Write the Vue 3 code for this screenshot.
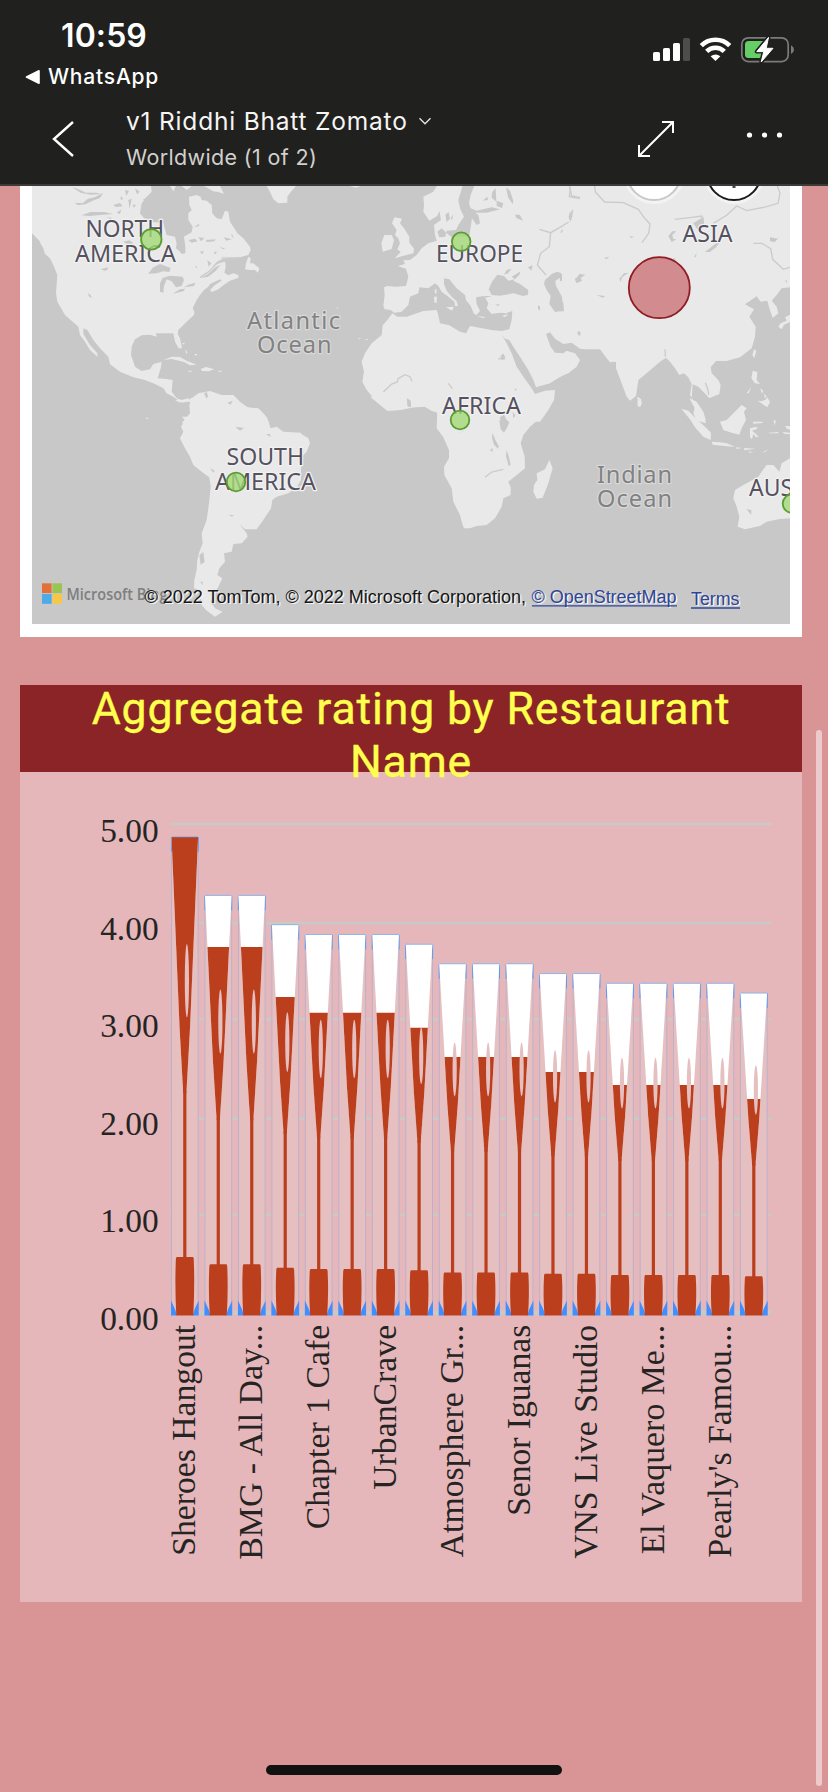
<script setup>
const land = [
  {
    t: 'translate(0 180) scale(.33333)',
    shapes: [
      'M96 10H452L455 35 440 50 425 70 420 100 432 115 455 125 490 130 500 165 525 170 530 190 528 205 540 215 545 222 556 220 556 200 552 170 575 157 578 140 565 120 565 100 575 90 568 75 567 50 590 45 602 50 605 60 620 62 635 75 637 100 650 115 665 118 675 92 685 95 690 125 700 140 712 160 730 175 750 200 752 210 745 225 720 232 690 234 665 238 650 246 640 258 660 248 676 245 677 262 673 278 685 286 700 280 715 285 716 293 690 302 672 314 655 328 636 336 630 330 645 315 665 302 660 298 630 312 625 320 612 330 600 345 590 360 578 385 583 395 582 405 560 425 535 450 533 462 540 475 546 505 536 505 525 485 520 460 500 460 468 460 470 470 450 464 425 466 405 478 395 500 393 525 405 560 425 573 450 568 460 552 485 545 482 565 473 595 500 597 518 600 515 635 530 655 545 660 565 655 575 665 560 665 545 668 520 650 500 640 490 625 465 612 435 600 400 592 360 575 330 553 325 530 300 505 280 480 262 450 250 445 250 462 270 495 292 520 292 530 270 510 255 485 240 465 235 440 218 425 195 405 172 365 168 340 172 285 160 255 150 235 135 222 130 205 118 182 96 160Z',
      'M120 188 132 192 142 212 132 206ZM148 232 168 238 182 262 165 255Z',
      'M735 268 738 250 745 230 752 235 750 250 760 250 778 265 774 278 765 270 750 270Z',
      'M800 18H888L875 32 862 50 862 68 835 70 820 58 810 35Z',
      'M510 18 528 18 520 34ZM545 18 575 18 560 30ZM612 18 660 18 672 42 655 36 640 34Z',
      'M490 540 515 530 540 531 560 542 590 554 570 556 552 546 515 537ZM602 567 618 561 643 568 625 574 606 573ZM565 572h10v3h-10zM655 572h10v3h-10zM546 490l8 -2-2 6zM555 507l7 10-3 6zM582 522l10 0-4 6z',
      'M545 730 570 700 568 675 575 655 595 640 630 633 665 645 700 645 720 665 745 683 775 685 795 705 808 730Z',
      'M438 712l8 3-6 3z'
    ]
  },
  {
    t: 'translate(300 180) scale(.33333)',
    shapes: [
      'M415 10 400 35 370 50 372 75 370 95 388 122 412 108 418 92 423 120 402 135 405 165 410 182 385 190 365 205 350 225 330 240 310 241 315 252 293 258 318 266 325 290 318 318 285 320 262 318 252 322 254 345 250 378 254 388 272 390 283 398 305 395 325 375 330 350 355 340 358 322 385 325 405 310 415 318 425 335 445 350 463 365 465 378 474 378 470 364 455 350 440 332 432 312 432 295 448 298 470 325 495 345 498 360 512 378 522 402 530 405 540 392 530 372 528 352 552 348 565 370 560 385 575 402 600 398 618 400 637 393 635 420 628 448 605 453 575 450 510 438 498 460 480 455 448 436 420 430 414 402 410 390 370 393 320 410 292 410 277 400 262 420 248 436 245 465 215 490 195 520 185 545 192 575 187 605 200 630 230 665 262 692 300 690 340 682 375 680 395 692 412 696 413 725H720L745 690 762 660 765 630 735 632 705 642 695 625 670 590 650 560 635 520 620 490 606 466 615 476 628 480 640 500 660 530 685 570 700 600 708 622 750 610 790 585 820 560 840 540V10Z',
      'M283 112 306 116 300 130 312 145 328 170 328 188 342 206 340 220 300 230 284 235 302 216 292 208 300 190 295 175 285 165 290 150 276 130Z',
      'M253 165 275 165 282 180 275 207 248 215 244 190Z',
      'M438 382 462 380 456 392ZM402 350 411 350 410 368 403 368ZM404 330 410 326 409 342 405 340ZM530 408l28 3-10 3zM606 408l18-6-8 9zM150 18h32l-15 5z',
      'M175 475h6v2h-6zM196 478h8v2h-8zM110 382l6 2-4 2z'
    ]
  },
  {
    t: 'translate(560 180) scale(.33333)',
    shapes: [
      'M0 10V490L35 495 40 505 75 508 120 508 140 535 150 547 168 545 168 565 185 610 200 650 210 662 228 648 235 600 265 575 300 545 318 533 330 545 345 565 358 585 372 580 385 592 395 612 390 645 408 675 430 700 438 730 410 722 400 700 405 680 395 655 398 613 415 620 430 635 448 655 478 642 482 615 475 600 455 580 452 562 468 543 500 543 540 532 575 505 585 470 587 440 568 410 582 388 555 373 590 349 602 365 622 362 628 385 638 414 655 400 650 380 635 362 650 345 665 325 690 322V10Z',
      'M0 510 20 518 60 540 50 560 25 580 0 590Z',
      'M690 404 675 412 680 422 662 430 655 440 665 448 672 434 690 426Z',
      'M582 508 589 512 583 535 577 525ZM235 650 246 668 240 682 232 675ZM578 572 592 576 590 600 600 612 585 610 574 595ZM600 625l10 8-4 8zM612 640l8 10-6 4zM592 662 612 665 622 652 630 666 622 682 608 672ZM560 640l14-20-8 20z'
    ]
  },
  {
    t: 'translate(0 400) scale(.33333)',
    shapes: [
      'M545 50 555 60 543 80 550 95 540 115 555 145 570 170 580 195 605 215 628 232 632 260 627 310 620 360 605 400 608 430 598 455 592 480 590 510 583 540 582 565 600 572 605 615 618 630 645 650 668 635 645 625 632 605 645 580 655 560 667 535 652 525 658 505 675 485 672 460 695 455 700 432 725 430 743 410 740 400 718 372 735 388 770 388 790 360 813 325 817 300 830 290 865 280 890 262 903 240V98L850 95 830 80 812 85 800 50Z',
      'M570 -5H700L730 20 770 25 790 45 808 85 600 90 560 60 572 40ZM525 0 545 0 540 8Z'
    ]
  },
  {
    t: 'translate(300 400) scale(.33333)',
    shapes: [
      'M-2 98 25 115 30 130 20 155 5 170 5 190 -2 245Z',
      'M210 -10 262 32 300 30 340 22 375 20 395 32 412 38 410 85 430 112 447 150 447 175 432 200 433 225 455 265 460 305 480 345 488 375 492 385 510 385 530 378 560 375 585 355 605 320 610 295 632 285 632 262 625 245 650 225 675 205 674 170 662 130 670 105 690 80 725 50 750 10 758 -10Z',
      'M748 180 758 205 745 250 728 293 710 296 700 275 702 255 712 240 710 220 735 208Z'
    ]
  },
  {
    t: 'translate(560 400) scale(.33333)',
    shapes: [
      'M480 65 500 60 520 40 545 15 560 25 552 35 558 60 545 85 538 104 515 98 490 90Z',
      'M364 26 385 32 410 58 435 80 453 98 452 120 430 110 405 82 390 58Z',
      'M388 -5 410 5 430 35 438 62 415 48 402 20Z',
      'M455 125 480 127 500 130 525 140 500 139 458 134ZM528 142l18 2-16 3zM552 144l35 2-34 5zM605 158 625 148 615 156ZM565 153l14 4-10 1z',
      'M570 85 590 80 592 86 576 92 584 98 596 110 588 112 580 102 576 118 570 112ZM578 65l30 0v4l-28 2zM640 60l8 2-4 14zM625 98l30-2v4l-28 0zM675 78 690 78V88L682 88ZM668 96l22 2v5l-18-2zM600 5 620 -2 628 8 615 18Z',
      'M690 175 665 190 658 215 640 195 620 195 605 215 595 230 550 255 525 270 520 295 530 320 538 350 533 380 555 388 600 378 620 365 655 358 690 355Z',
      'M232 -10 244 -2 243 18 235 20Z'
    ]
  }
]

const water = [
  {
    t: 'translate(0 180) scale(.33333)',
    shapes: [
      'M444 281 460 262 480 252 512 264 508 276 490 274 470 280Z',
      'M480 335 480 310 488 294 510 287 548 290 552 300 545 318 528 322 515 304 500 298 492 318 490 338Z',
      'M518 341 540 328 556 326 550 334ZM552 322 565 314 586 308 582 318Z',
      'M262 338l10 8 4 8-8-4zM302 268l22-6-2 8-8 2zM224 68l24 2 16-14 20-4 26-14-10 16-22 8-20 10-24 4zM216 22l16 4 26 12 32 0 12 4-30 2-30-6zM244 106l28-10 40 0 28 6-30 2-42 4zM320 112l16 2-4 4zM370 185l18-4 12 8-14 8zM340 75l20-6 8 10-20 2zM350 98l14-10-4 14zM375 30l12 2-8 16zM405 25l14 10-8 8zM385 60l10-4-6 30zM362 48l8 8-8 4zM428 60l14-10 0 10zM398 74l10 0-6 10z',
      'M565 180l20-4 8 8-18 4zM595 172l18 2-10 10zM582 142l14-10 2 6zM617 180l30-2-4 6-22 2zM600 215l12-2-6 10zM622 240l12 10-8 10zM588 256l4 10-6-4zM672 172l24 6-18 4zM660 200l16 6-8 2zM695 160l6 14-6-4zM640 220l10-8-2 10zM602 294l22-12 22-20 16-8-16 20-22 16z',
      'M612 640l8-4 4 12-4 8zM682 668l16-6-6 12z'
    ]
  },
  {
    t: 'translate(300 180) scale(.33333)',
    shapes: [
      'M490 10 475 60 480 85 492 110 475 135 468 150 440 152 436 170 418 172 412 155 425 145 440 160 455 172 508 168 512 140 516 115 530 135 540 130 535 105 526 98 560 98 600 88 575 82 530 92 512 85 507 70 512 45 526 10Z',
      'M592 284 612 288 625 302 645 298 635 290 662 274 658 284 640 302 660 312 685 330 684 344 670 348 640 340 600 347 575 345 566 328 576 305ZM612 284 620 270 635 266 624 280ZM552 348h24l-20 5z',
      'M735 300 755 282 772 275 784 280 784 292 766 302 768 318 786 350 790 392 765 396 748 372 752 348 740 330 732 312Z',
      'M738 462 750 457 765 476 790 492 815 488 840 506V540L825 520 800 512 790 520 765 518 752 500Z',
      'M577 35l10-10 2 40-14-12zM548 62l14-12 2 10zM590 62l20 8-4 14-16-6zM618 22l12 10 10 30-2 10-14-20zM645 104l14 0 10 18-20-8zM436 104l10-8 4 20-10 10zM452 115l8-12-4 18zM320 655l10 5 4 22-10-4zM602 528l8-8 6 18-12 2zM684 262l14-6-4 16zM690 372l10 4zM714 376l6 4 0 12-6-6zM825 295l15-6v16l-12 0zM585 374l14-2-4 6z',
      'M600 712l12-8 8 16-18 4z'
    ]
  },
  {
    t: 'translate(560 180) scale(.33333)',
    shapes: [
      'M435 216 470 188 482 184 470 200 450 216ZM402 232 410 218 408 230ZM325 168l12-14 12 0-12 10 2 12 10 2-14 8zM400 130l30-20 4 30-18 14zM630 172l24 4-10 10-14-2zM46 300l12-18 18 2-14 10 4 8-16 8zM178 296l14-16 14-2-20 14-4 14zM110 345l26 3-8 5zM132 234l16-4-8 8zM54 454l8 2-2 12-8-6zM30 95l8 10-6 20-6-14zM208 168l14 2-8 4zM335 238l10-4 2 10zM675 300l6 2 0 8zM0 278l6 6 0 20-6-2zM0 360l10 8 2 26-12 0zM465 548l20-4 8 22-12 4z'
    ]
  },
  {
    t: 'translate(0 400) scale(.33333)',
    shapes: ['M706 80l26 4-12 8zM798 102l12 0 2 10zM630 204l14 8-4 6zM686 344l16 2-6 4zM598 466l12-10 4 30-12 8zM600 545l8 0 0 10z']
  },
  {
    t: 'translate(300 400) scale(.33333)',
    shapes: ['M598 62l14-8 16 12-6 16-10 16-10-10zM578 98l8 22 10 18-2 8-12-12-6-20zM620 150l6 18 6 26-6 4-8-30zM570 150l8-6 0 12zM638 35l8 12-6 8zM478 100l14-10-6 6zM322 0l10 2 0 20-10-4z']
  },
  { t: 'translate(560 400) scale(.33333)', shapes: ['M560 328l14 2 0 14-6-6z'] }
]

const rivers = [
  { t: 'translate(0 180) scale(.33333)', shapes: ['M600 292 628 274 648 252 672 242 720 236', 'M665 234h60'] },
  {
    t: 'translate(300 180) scale(.33333)',
    shapes: [
      'M250 636 275 612 292 606 294 596 315 584 330 590 336 604',
      'M808 18 815 48 840 52M810 120 818 92M718 148 752 158 780 142 806 126M752 158 748 200 722 220 712 255 738 285M620 480 630 486M445 610l12 16M645 626l4 6M595 538l20-10'
    ]
  },
  {
    t: 'translate(560 180) scale(.33333)',
    shapes: [
      'M104 18 106 36 134 66 190 68 235 88 252 112 270 132 266 160 246 188M32 22 28 50 60 56M38 90 28 116M2 158 8 150',
      'M344 118 395 112 425 108 430 122M460 130 500 106 530 78 560 92 620 80 654 70 660 40 652 18M580 190 606 190 632 206 638 238 670 268 690 262M315 508 316 530M436 608 444 630 446 645'
    ]
  },
  { t: 'translate(300 400) scale(.33333)', shapes: ['M555 232 575 216 610 208'] }
]

const labels = [
  { s: 'NORTH', x: 85.5, y: 237, w: 78.5 },
  { s: 'AMERICA', x: 75, y: 262, w: 101 },
  { s: 'EUROPE', x: 436, y: 262, w: 87 },
  { s: 'ASIA', x: 682.5, y: 242, w: 50 },
  { s: 'AFRICA', x: 442, y: 414, w: 79 },
  { s: 'SOUTH', x: 226.5, y: 465, w: 77.5 },
  { s: 'AMERICA', x: 215, y: 490, w: 101 },
  { s: 'AUS', x: 749, y: 496, w: 44 }
]
const oceans = [
  { s: 'Atlantic', x: 247, y: 329, w: 93 },
  { s: 'Ocean', x: 257, y: 353, w: 74.5 },
  { s: 'Indian', x: 597, y: 483, w: 75 },
  { s: 'Ocean', x: 597, y: 507, w: 75 }
]
const pins = [
  [151.3, 239.4, 10.2],
  [461.2, 241.7, 9.3],
  [460, 420, 9.3],
  [236, 482, 9.3],
  [792, 503.6, 9.3]
]

const base = 1315.5
const ratings = [
  [4.9, 836.8], [4.3, 947], [4.3, 947], [4.0, 997], [3.9, 1012.8], [3.9, 1012.8],
  [3.9, 1012.8], [3.8, 1027.7], [3.6, 1057], [3.6, 1057], [3.6, 1057], [3.5, 1072],
  [3.5, 1072], [3.4, 1085], [3.4, 1085], [3.4, 1085], [3.4, 1085], [3.3, 1099]
]
const columns = ratings.map(([v, level], i) => {
  const h = v * 97.7
  const top = base - h
  const x = 171 + i * 33.47
  const c = x + 13.8
  const neck = top + h * 0.536
  const cone = `M${x + 0.5} ${top}H${x + 27.1}L${c + 5.2} ${top + h * 0.4}L${c + 1.6} ${neck}H${c - 1.6}L${c - 5.2} ${top + h * 0.4}Z`
  const grip = base - h * 0.122
  const handle = `M${c - 8} ${grip}H${c + 8}Q${c + 9} ${grip} ${c + 9} ${grip + 4}Q${c + 10} ${(grip + base) / 2} ${c + 8.5} ${base}H${c - 8.5}Q${c - 10} ${(grip + base) / 2} ${c - 9} ${grip + 4}Q${c - 9} ${grip} ${c - 8} ${grip}Z`
  return { i, h, top, x, c, neck, cone, handle, level, grip, holeY: top + h * 0.3005, holeR: h * 0.0765 }
})
const grid = [824, 923, 1019.3, 1118.6, 1215]
const ticks = [
  ['5.00', 842], ['4.00', 939.8], ['3.00', 1037.3], ['2.00', 1134.8], ['1.00', 1232.2], ['0.00', 1329.6]
]
const names = [
  ['Sheroes Hangout', 231], ['BMG - All Day...', 235], ['Chapter 1 Cafe', 204.5], ['UrbanCrave', 165],
  ['Atmosphere Gr...', 232.5], ['Senor Iguanas', 191], ['VNS Live Studio', 234], ['El Vaquero Me...', 229.5],
  ["Pearly's Famou...", 233]
]
</script>

<template>
  <div class="screen">
    <header class="top">
      <div class="status">
        <div class="clock">
          <div class="time">10:59</div>
          <div class="return">
            <svg width="16" height="16" viewBox="0 0 16 16"><path d="M1.5 8 14 1.8V14.2Z" fill="#fff" stroke="#fff" stroke-width="1.6" stroke-linejoin="round" /></svg>
            <span>WhatsApp</span>
          </div>
        </div>
        <svg class="radio" width="146" height="32" viewBox="650 34 146 32">
          <g fill="#fff">
            <rect x="653" y="52" width="7" height="9" rx="1.6" />
            <rect x="663" y="48" width="7" height="13" rx="1.6" />
            <rect x="673" y="43" width="7" height="18" rx="1.6" />
            <rect x="683" y="38" width="7" height="23" rx="1.6" fill="#4d4d4b" />
          </g>
          <g fill="none" stroke="#fff" stroke-width="4.6">
            <path d="M701.3 45.6A20.3 20.3 0 0 1 729.7 45.6" />
            <path d="M706.7 51.4A12.6 12.6 0 0 1 724.3 51.4" />
          </g>
          <path d="M715.5 61 710.6 56.2Q715.5 52.6 720.4 56.2Z" fill="#fff" />
          <rect x="741.8" y="37.8" width="46.4" height="23.8" rx="6.5" fill="none" stroke="#7b7b7a" stroke-width="1.7" />
          <path d="M791 45.3Q794 47 794 49.7T791 54Z" fill="#7b7b7a" />
          <path d="M748.5 41H763V58H748.5Q745 58 745 54.5V44.5Q745 41 748.5 41Z" fill="#65cf66" />
          <path d="M768.5 37.4 756.8 51.6H763.8L761.2 62 773 48.3H766.2Z" fill="#fff" stroke="#20201e" stroke-width="4" stroke-linejoin="round" />
          <path d="M768.5 37.4 756.8 51.6H763.8L761.2 62 773 48.3H766.2Z" fill="#fff" stroke="#fff" stroke-width="1" stroke-linejoin="round" />
        </svg>
      </div>
      <div class="nav">
        <svg class="back" width="24" height="40" viewBox="51 119 24 40"><path d="M73 122 54 139 73 156" fill="none" stroke="#fff" stroke-width="2.4" /></svg>
        <div class="titles">
          <div class="report">
            <span>v1 Riddhi Bhatt Zomato</span>
            <svg width="14" height="10" viewBox="417 116 14 10"><path d="M418.5 118.3 424 123.8 429.5 118.3" fill="none" stroke="#e6e6e6" stroke-width="1.3" /></svg>
          </div>
          <div class="pageno">Worldwide (1 of 2)</div>
        </div>
        <svg class="expand" width="40" height="40" viewBox="636 119 40 40"><path d="M639 156 673 122M662 122H673V133M639 145V156H650" fill="none" stroke="#fff" stroke-width="2" /></svg>
        <svg class="more" width="38" height="10" viewBox="746 130 38 10"><g fill="#fff"><circle cx="749.5" cy="135" r="2.6" /><circle cx="764.5" cy="135" r="2.6" /><circle cx="779.5" cy="135" r="2.6" /></g></svg>
      </div>
    </header>

    <main class="canvas">
      <section class="mapcard">
        <svg class="map" width="758" height="438" viewBox="32 186 758 438">
          <rect x="32" y="186" width="758" height="438" fill="#c8c8c8" />
          <g v-for="(g, i) in land" :key="'l' + i" :transform="g.t" fill="#e9e9e9"><path v-for="(d, j) in g.shapes" :key="j" :d="d" /></g>
          <g v-for="(g, i) in water" :key="'w' + i" :transform="g.t" fill="#c8c8c8"><path v-for="(d, j) in g.shapes" :key="j" :d="d" /></g>
          <g v-for="(g, i) in rivers" :key="'r' + i" :transform="g.t" fill="none" stroke="#cbcbcb" stroke-width="4"><path v-for="(d, j) in g.shapes" :key="j" :d="d" /></g>
          <text v-for="(l, i) in labels" :key="'c' + i" class="continent" :x="l.x" :y="l.y" :textLength="l.w" lengthAdjust="spacingAndGlyphs">{{ l.s }}</text>
          <text v-for="(l, i) in oceans" :key="'o' + i" class="ocean" :x="l.x" :y="l.y" :textLength="l.w">{{ l.s }}</text>
          <circle v-for="(p, i) in pins" :key="'p' + i" :cx="p[0]" :cy="p[1]" :r="p[2]" fill="#a4da78" fill-opacity=".8" stroke="#5b9c33" stroke-width="1.8" />
          <circle cx="659.3" cy="287.7" r="30.5" fill="#c9666b" fill-opacity=".72" stroke="#8f1d22" stroke-width="1.8" />
          <g stroke-width="2">
            <circle cx="654" cy="173" r="31" fill="#f3f3f3" /><circle cx="654" cy="173" r="27" fill="#fff" stroke="#c8c8c8" />
            <circle cx="734" cy="173" r="31" fill="#f3f3f3" /><circle cx="734" cy="173" r="27" fill="#fff" stroke="#1a1a1a" />
            <path d="M734 182V188" stroke="#444" stroke-width="3" />
          </g>
          <rect x="42" y="583.3" width="9.6" height="9.8" fill="#e2703a" /><rect x="52.4" y="583.3" width="9.6" height="9.8" fill="#9bc455" />
          <rect x="42" y="594" width="9.6" height="9.8" fill="#4faaea" /><rect x="52.4" y="594" width="9.6" height="9.8" fill="#f7c747" />
          <text class="brand" x="66.5" y="600" textLength="101" lengthAdjust="spacingAndGlyphs">Microsoft Bing</text>
          <text class="credit" x="144.5" y="602.7" textLength="381.5" lengthAdjust="spacingAndGlyphs">© 2022 TomTom, © 2022 Microsoft Corporation,</text>
          <g class="credit link">
            <text x="531.5" y="602.7" textLength="145" lengthAdjust="spacingAndGlyphs">© OpenStreetMap</text>
            <text x="691" y="604.7" textLength="48.5" lengthAdjust="spacingAndGlyphs">Terms</text>
            <path d="M532 605.8H677M691 608H740" stroke="#2f4596" stroke-width="1.3" />
          </g>
        </svg>
      </section>

      <section class="chartcard">
        <h2><span>Aggregate rating by Restaurant<br />Name</span></h2>
        <svg class="chart" width="782" height="830" viewBox="20 772 782 830">
          <path v-for="y in grid" :key="y" :d="`M170 ${y}H771.5`" stroke="#c9c9c7" stroke-width="2.6" />
          <path d="M170 1312.8H771" stroke="#c9c9c7" stroke-width="4.4" />
          <text v-for="t in ticks" :key="t[0]" class="axis" x="158.6" :y="t[1]" text-anchor="end">{{ t[0] }}</text>
          <g v-for="c in columns" :key="c.i">
            <rect :x="c.x" :y="c.top" width="27.7" :height="c.h" fill="#e6bfc1" />
            <path :d="`M${c.x + .5} ${base}V${c.top + .5}H${c.x + 27.2}V${base}`" fill="none" stroke="#b3accb" stroke-width=".8" />
            <path :d="`M${c.x + .4} ${c.top + 15}V${c.top + .4}M${c.x + 27.3} ${c.top + .4}V${c.top + 15}`" stroke="#5c9df2" stroke-width="1" />
            <path :d="c.cone" fill="#fff" />
            <clipPath :id="'fill' + c.i"><rect :x="c.x" :y="c.level" width="28" height="500" /></clipPath>
            <path :d="c.cone" fill="#bb3f1d" :clip-path="`url(#fill${c.i})`" />
            <path :d="`M${c.x + .7} ${c.top}H${c.x + 27}`" stroke="#78abee" stroke-width=".8" />
            <rect :x="c.c - 1.6" :y="c.neck - 3" width="3.2" :height="c.grip - c.neck + 5" fill="#bb3f1d" />
            <ellipse :cx="c.c + 2.1" :cy="c.holeY" rx="2.1" :ry="c.holeR" fill="#e6bfc1" />
            <path :d="`M${c.x} ${base}V${base - 15}L${c.x + 4.2} ${base - 6}L${c.x + 6} ${base}ZM${c.x + 27.7} ${base}V${base - 15}L${c.x + 23.5} ${base - 6}L${c.x + 21.7} ${base}Z`" fill="#418fff" />
            <path :d="c.handle" fill="#bb3f1d" />
          </g>
          <text v-for="(n, i) in names" :key="n[0]" class="axis" :transform="`translate(${195.2 + i * 66.94} ${1324.8 + n[1]}) rotate(-90)`" :textLength="n[1]" lengthAdjust="spacingAndGlyphs">{{ n[0] }}</text>
        </svg>
      </section>
      <div class="scroll"></div>
      <div class="home"></div>
    </main>
  </div>
</template>

<style>
body { margin: 0; }
</style>

<style scoped>
.screen { width: 828px; height: 1792px; overflow: hidden; display: flex; flex-direction: column; font-family: Inter, "Liberation Sans", sans-serif; }
.top { box-sizing: border-box; flex: none; height: 186px; background: #20201e; border-bottom: 2px solid #3b3a38; color: #fff; }
.status { display: flex; justify-content: space-between; height: 94px; padding: 0 32px 0 25px; }
.time { margin: 16px 0 0 36px; font-size: 32px; line-height: 40px; font-weight: 600; letter-spacing: .1px; }
.return { display: flex; align-items: center; gap: 7px; margin-top: 7px; height: 28px; font-size: 21px; line-height: 28px; font-weight: 500; letter-spacing: .8px; }
.radio { margin-top: 34px; }
.nav { display: flex; height: 90px; }
.back { flex: none; margin: 25px 0 0 51px; }
.titles { width: 509px; margin-left: 51px; }
.report { display: flex; align-items: center; height: 30px; margin-top: 12px; gap: 10px; font-size: 24.5px; letter-spacing: .8px; color: #f6f5f4; white-space: nowrap; font-weight: 400; }
.pageno { margin-top: 7px; font-size: 21.5px; line-height: 28px; letter-spacing: .35px; color: #d2d0ce; font-weight: 400; }
.expand { margin-top: 25px; margin-left: 1px; }
.more { margin: 36px 0 0 70px; }
.canvas { position: relative; flex: 1; background: #d99595; }
.mapcard { width: 758px; height: 438px; margin-left: 20px; padding: 0 12px 13px; background: #fff; }
.map, .chart { display: block; }
.continent, .ocean { font-family: "Noto Sans", "Open Sans", sans-serif; font-size: 23.6px; paint-order: stroke; stroke-linejoin: round; }
.continent { fill: #55515f; stroke: #f2f2f2; stroke-width: 2.5px; }
.ocean { fill: #828282; stroke: #d9d9d9; stroke-width: 2.5px; }
.brand { font-family: "Open Sans", sans-serif; font-size: 17px; font-weight: 600; fill: #7f7f7f; }
.credit { font-family: "Liberation Sans", Arial, sans-serif; font-size: 18px; fill: #161616; text-shadow: 1.5px 1.5px 0 #f4f4f4; }
.link { fill: #2f4596; }
.chartcard { width: 782px; height: 917px; margin: 48px 0 0 20px; background: #e5b7ba; }
h2 { display: flow-root; position: relative; z-index: 1; margin: 0; height: 87px; background: #8b2426; color: #ffff4e; font: 400 44.5px/53px Roboto, sans-serif; letter-spacing: .9px; text-align: center; white-space: nowrap; -webkit-text-stroke: .4px #ffff4e; }
h2 span { display: block; margin-top: -2px; }
.axis { font-family: "Liberation Serif", "Times New Roman", serif; font-size: 33.4px; fill: #252423; }
.scroll { position: absolute; left: 816px; top: 544px; width: 6px; height: 1056px; border-radius: 3px; background: #edcbcd; }
.home { position: absolute; left: 266px; top: 1579px; width: 296px; height: 10px; border-radius: 5px; background: #111; }
</style>
